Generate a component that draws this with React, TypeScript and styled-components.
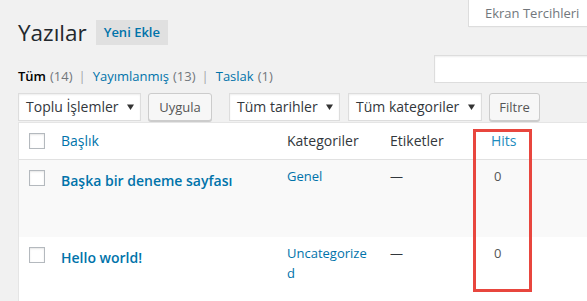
import styled, { createGlobalStyle } from "styled-components";

const GlobalStyle = createGlobalStyle`
  html, body {
    margin: 0;
    padding: 0;
    background: #f1f1f1;
    overflow: hidden;
  }
  body {
    font-family: "Open Sans", "DejaVu Sans", sans-serif;
    font-size: 13px;
    color: #23282d;
  }
`;

const Page = styled.div`
  width: 620px;
  padding-left: 18px;
`;

const TopRow = styled.div`
  display: flex;
  align-items: flex-start;
  height: 47px;
`;

const TitleGroup = styled.div`
  display: flex;
  align-items: center;
  gap: 9px;
  margin-top: 18px;
`;

const Heading = styled.h1`
  margin: 0;
  font-size: 22.5px;
  font-weight: 400;
  line-height: 29px;
  color: #23282d;
`;

const AddButton = styled.a`
  display: block;
  background: #e0e0e0;
  color: #0073aa;
  font-size: 13px;
  font-weight: 600;
  line-height: 25px;
  padding: 0 8px;
  text-decoration: none;
`;

const ScreenTab = styled.div`
  margin-left: auto;
  margin-right: 20px;
  width: 150px;
  height: 27px;
  box-sizing: border-box;
  background: #fff;
  border: 1px solid #ddd;
  border-top: none;
  box-shadow: 0 1px 1px -1px rgba(0, 0, 0, 0.1);
  color: #72777c;
  font-size: 13px;
  line-height: 26px;
  padding-left: 16px;
  white-space: nowrap;
`;

const TabArrow = styled.span`
  margin-left: 8px;
  color: #72777c;
`;

const FilterRow = styled.div`
  display: flex;
  align-items: flex-start;
  margin-top: 8px;
  height: 31px;
`;

const StatusList = styled.ul`
  list-style: none;
  margin: 11px 0 0;
  padding: 0;
  display: flex;
  font-size: 13px;
  line-height: 20px;
`;

const StatusItem = styled.li`
  display: flex;
  gap: 4px;
`;

const StatusLink = styled.a<{ $current?: boolean }>`
  color: ${(p) => (p.$current ? "#000" : "#0073aa")};
  font-weight: ${(p) => (p.$current ? 600 : 400)};
  text-decoration: none;
`;

const Count = styled.span`
  color: #72777c;
`;

const Sep = styled.span`
  color: #a0a5aa;
  padding: 0 7px 0 6px;
`;

const SearchBox = styled.div`
  margin-left: auto;
  width: 204px;
  height: 28px;
  box-sizing: border-box;
  background: #fff;
  border: 1px solid #ddd;
  box-shadow: inset 0 1px 2px rgba(0, 0, 0, 0.07);
`;

const Toolbar = styled.div`
  display: flex;
  align-items: center;
  margin-top: 6px;
  height: 29px;
`;

const Select = styled.div<{ $w: number; $gap?: number }>`
  width: ${(p) => p.$w}px;
  margin-left: ${(p) => p.$gap ?? 0}px;
  height: 28px;
  box-sizing: border-box;
  background: #fff;
  border: 1px solid #ddd;
  box-shadow: inset 0 1px 2px rgba(0, 0, 0, 0.07);
  display: flex;
  align-items: center;
  justify-content: space-between;
  padding: 0 6px 0 7px;
  color: #32373c;
  font-size: 14px;
`;

const Button = styled.div<{ $w: number; $gap: number }>`
  width: ${(p) => p.$w}px;
  margin-left: ${(p) => p.$gap}px;
  height: 28px;
  box-sizing: border-box;
  background: #f7f7f7;
  border: 1px solid #ccc;
  border-radius: 3px;
  box-shadow: 0 1px 0 #ccc;
  color: #555;
  font-size: 13px;
  display: flex;
  align-items: center;
  justify-content: center;
`;

const Arrow = () => (
  <svg width="7" height="6" viewBox="0 0 7 6">
    <path d="M0 0.5h7L3.5 6z" fill="#333" />
  </svg>
);

const TableWrap = styled.div`
  position: relative;
  margin-top: 1px;
  width: 602px;
  background: #fff;
  border: 1px solid #e5e5e5;
  border-right: none;
`;

const Row = styled.div<{ $alt?: boolean; $head?: boolean }>`
  display: grid;
  grid-template-columns: 32px 226px 103px 101px 60px 1fr;
  background: ${(p) => (p.$alt ? "#f9f9f9" : "#fff")};
  min-height: ${(p) => (p.$head ? "35px" : "77px")};
  border-bottom: ${(p) => (p.$head ? "1px solid #e1e1e1" : "none")};
`;

const CheckCell = styled.div`
  padding: 10px 0 0 10px;
`;

const Checkbox = styled.span`
  display: block;
  width: 16px;
  height: 16px;
  box-sizing: border-box;
  background: #fff;
  border: 1px solid #b4b9be;
  box-shadow: inset 0 1px 2px rgba(0, 0, 0, 0.1);
`;

const HeadCell = styled.div<{ $link?: boolean; $color?: string }>`
  padding: 8px 10px;
  font-size: 14px;
  line-height: 20px;
  color: ${(p) => p.$color ?? (p.$link ? "#0073aa" : "#32373c")};
`;

const TitleCell = styled.div`
  padding: 11px 10px 0 10px;
  font-size: 14px;
  font-weight: 600;
  line-height: 20px;
  color: #0073aa;
`;

const Cell = styled.div<{ $color?: string; $pad?: number }>`
  padding: 7px 10px 0 ${(p) => p.$pad ?? 10}px;
  font-size: 13px;
  line-height: 19.5px;
  color: ${(p) => p.$color ?? "#32373c"};
  overflow-wrap: anywhere;
`;

const Highlight = styled.div`
  position: absolute;
  left: 454px;
  top: 6px;
  width: 59px;
  height: 163px;
  box-sizing: border-box;
  border: 3px solid #e8463e;
  pointer-events: none;
`;

const posts = [
  { title: "Başka bir deneme sayfası", category: "Genel", hits: 0 },
  { title: "Hello world!", category: "Uncategorized", hits: 0 },
];

export default function App() {
  return (
    <>
      <GlobalStyle />
      <Page>
        <TopRow>
          <TitleGroup>
            <Heading>Yazılar</Heading>
            <AddButton>Yeni Ekle</AddButton>
          </TitleGroup>
          <ScreenTab>
            Ekran Tercihleri<TabArrow>▾</TabArrow>
          </ScreenTab>
        </TopRow>
        <FilterRow>
          <StatusList>
            <StatusItem>
              <StatusLink $current>Tüm</StatusLink>
              <Count>(14)</Count>
            </StatusItem>
            <Sep>|</Sep>
            <StatusItem>
              <StatusLink>Yayımlanmış</StatusLink>
              <Count>(13)</Count>
            </StatusItem>
            <Sep>|</Sep>
            <StatusItem>
              <StatusLink>Taslak</StatusLink>
              <Count>(1)</Count>
            </StatusItem>
          </StatusList>
          <SearchBox />
        </FilterRow>
        <Toolbar>
          <Select $w={123}>
            Toplu İşlemler <Arrow />
          </Select>
          <Button $w={64} $gap={7}>Uygula</Button>
          <Select $w={111} $gap={17}>
            Tüm tarihler <Arrow />
          </Select>
          <Select $w={134} $gap={8}>
            Tüm kategoriler <Arrow />
          </Select>
          <Button $w={51} $gap={7}>Filtre</Button>
        </Toolbar>
        <TableWrap>
          <Row $head>
            <CheckCell>
              <Checkbox />
            </CheckCell>
            <HeadCell $link>Başlık</HeadCell>
            <HeadCell>Kategoriler</HeadCell>
            <HeadCell>Etiketler</HeadCell>
            <HeadCell $color="#1e8cbe">Hits</HeadCell>
            <HeadCell />
          </Row>
          {posts.map((post, i) => (
            <Row key={post.title} $alt={i % 2 === 0}>
              <CheckCell>
                <Checkbox />
              </CheckCell>
              <TitleCell>{post.title}</TitleCell>
              <Cell $color="#0073aa">{post.category}</Cell>
              <Cell>—</Cell>
              <Cell $pad={13} $color="#555">
                {post.hits}
              </Cell>
              <Cell />
            </Row>
          ))}
          <Highlight />
        </TableWrap>
      </Page>
    </>
  );
}
